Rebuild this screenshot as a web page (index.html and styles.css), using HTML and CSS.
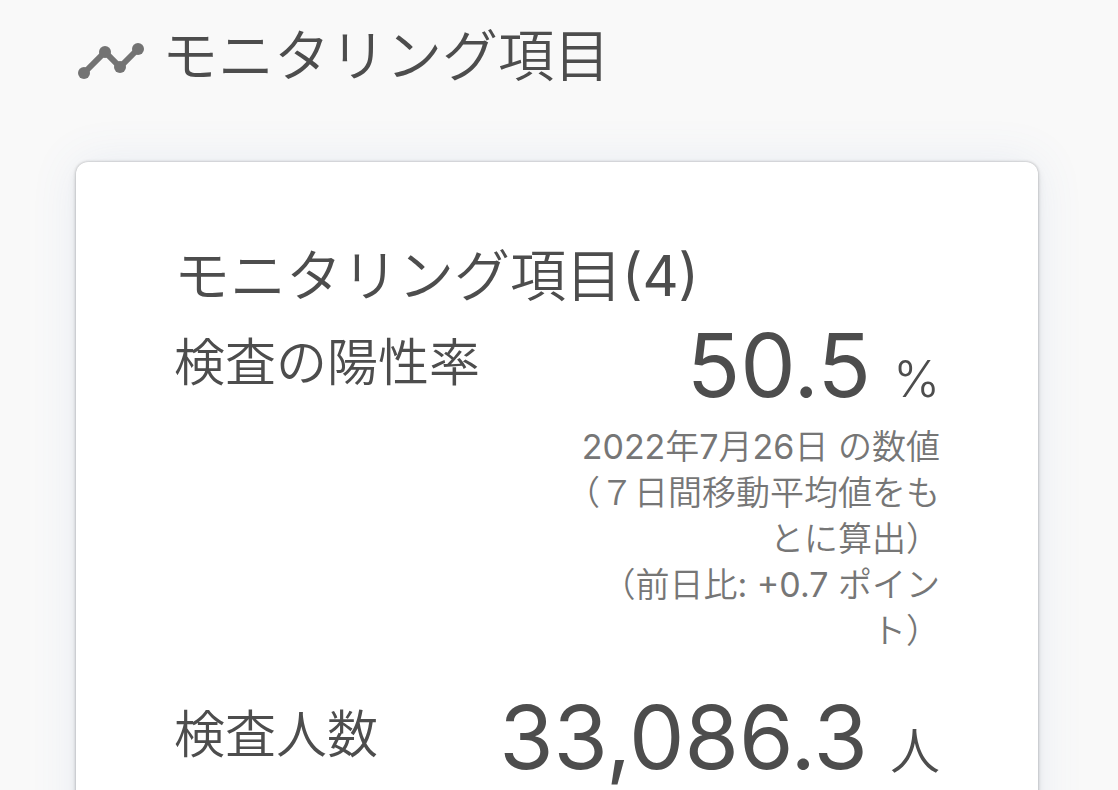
FILE: index.html
```
<!DOCTYPE html>
<html lang="ja">
<head>
  <meta charset="UTF-8" />
  <meta name="viewport" content="width=device-width, initial-scale=1.0" />
  <title>モニタリング項目</title>
  <link rel="stylesheet" href="styles.css">
</head>
<body>
  <main>
    <h2 class="page-title">
      <svg class="chart-icon" viewBox="0 0 68 38" aria-hidden="true">
        <path d="M8 31 L29 10 L44 25 L62 7" />
        <circle cx="8" cy="31" r="6" />
        <circle cx="29" cy="10" r="6" />
        <circle cx="44" cy="25" r="6" />
        <circle cx="62" cy="7" r="6" />
      </svg>
      モニタリング項目
    </h2>

    <section class="card">
      <h3 class="card-title">モニタリング項目<span class="num">(4)</span></h3>

      <div class="data-row">
        <h4 class="label">検査の陽性率</h4>
        <div class="data">
          <p class="value">50.5<span class="unit"> %</span></p>
          <p class="note"><span class="num">2022</span>年<span class="num">7</span>月<span class="num">26</span>日 の数値<br>（７日間移動平均値をもとに算出）</p>
          <p class="note">（前日比<span class="num">: +0.7</span> ポイント）</p>
        </div>
      </div>

      <div class="data-row">
        <h4 class="label">検査人数</h4>
        <div class="data">
          <p class="value">33,086.3<span class="unit"> 人</span></p>
        </div>
      </div>
    </section>
  </main>
</body>
</html>
```
FILE: styles.css
```
:root {
  --bg-color: #f9f9f9;
  --card-bg: #fff;
  --text-color: #4d4d4d;
  --note-color: #767676;
}
* {
  box-sizing: border-box;
}
body {
  margin: 0;
  font-family: Inter, "Noto Sans CJK JP", sans-serif;
  background-color: var(--bg-color);
  color: var(--text-color);
}
h2, h3, h4, p {
  margin: 0;
  font-weight: 350;
}
main {
  padding: 16px 80px 0 76px;
}
.num {
  font-weight: 400;
}
.page-title {
  display: flex;
  align-items: center;
  gap: 18px;
  font-size: 56px;
  line-height: 80px;
}
.chart-icon {
  width: 68px;
  height: 38px;
  margin-top: 10px;
  fill: #737373;
}
.chart-icon path {
  fill: none;
  stroke: #737373;
  stroke-width: 6;
}
.card {
  margin-top: 66px;
  padding: 74px 98px 40px;
  background-color: var(--card-bg);
  border-radius: 12px;
  box-shadow: 0 0 3px rgba(0, 0, 0, 0.3), 0 4px 8px rgba(0, 0, 0, 0.1), 0 0 48px rgba(80, 120, 190, 0.1);
}
.card-title {
  font-size: 56px;
  line-height: 80px;
}
.data-row {
  display: flex;
  justify-content: space-between;
  margin-bottom: 34px;
}
.label {
  padding-top: 12px;
  font-size: 51px;
  line-height: 70px;
  white-space: nowrap;
}
.data {
  text-align: right;
}
.value {
  padding-top: 4px;
  font-size: 88px;
  font-weight: 400;
  line-height: 90px;
  white-space: nowrap;
}
.unit {
  margin-left: 8px;
  font-size: 50px;
  font-weight: 350;
}
.note {
  max-width: 380px;
  margin-left: auto;
  color: var(--note-color);
  font-size: 34px;
  line-height: 46px;
}
```
